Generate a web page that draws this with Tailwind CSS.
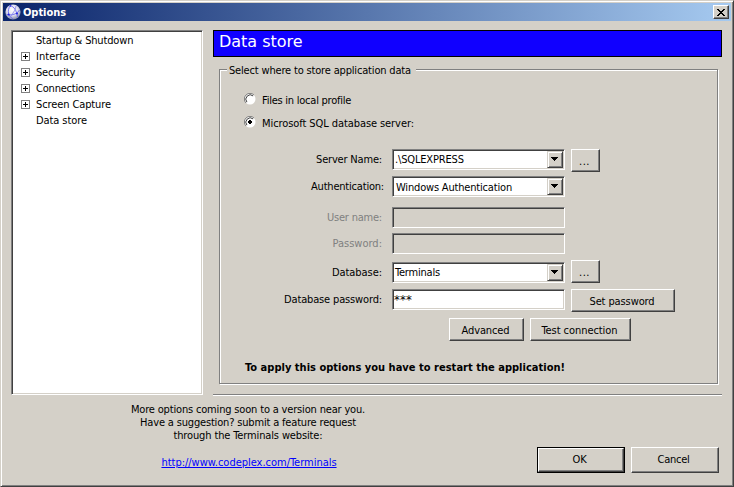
<!DOCTYPE html>
<html lang="en">
<head>
<meta charset="utf-8">
<title>Options</title>
<script src="https://cdn.jsdelivr.net/npm/@tailwindcss/browser@4"></script>
</head>
<body class="overflow-hidden">
<div class="w-[734px] h-[487px] border border-t-[#d4d0c8] border-l-[#d4d0c8] border-r-[#404040] border-b-[#404040] bg-[#d4d0c8] shadow-[inset_1px_1px_0_#fff,inset_-1px_-1px_0_#808080] p-[2px] flex flex-col text-[11px] leading-[13px] text-black whitespace-nowrap font-['DejaVu_Sans_Condensed','DejaVu_Sans',sans-serif] tracking-[-0.16px]">

  <!-- Title bar -->
  <header class="h-[18px] shrink-0 flex items-center pl-[2px] pr-[2px] bg-linear-to-r/srgb from-[#0a246a] to-[#a6caf0]">
    <svg class="size-4 shrink-0" viewBox="0 0 16 16">
      <defs><radialGradient id="g" cx=".45" cy=".35" r=".65"><stop offset="0" stop-color="#fff"/><stop offset=".6" stop-color="#dcdcec"/><stop offset="1" stop-color="#8288a8"/></radialGradient></defs>
      <circle cx="8" cy="8" r="7.6" fill="url(#g)"/>
      <g fill="none" stroke="#5a5af0" stroke-width=".8">
        <path d="M5.5 1.2C3.5 4 3 7 3.6 9.5S6 13.5 8 15.2"/>
        <path d="M5.5 1.5C9 3 11.5 6 12.5 13"/>
        <path d="M1.5 10.5C5 11.5 9 11 12.5 8.5L14.5 6"/>
        <path d="M11 2L10 6 5 13.5" stroke="#8a8aee"/>
      </g>
      <g fill="#2020e0"><circle cx="3.7" cy="10.5" r="1"/><circle cx="12" cy="9.5" r="1"/><circle cx="5.5" cy="2" r=".8"/></g>
    </svg>
    <h1 class="ml-[2px] font-bold text-white tracking-[-0.05px]">Options</h1>
    <button class="ml-auto w-4 h-[14px] bg-[#d4d0c8] border border-t-white border-l-white border-r-[#404040] border-b-[#404040] shadow-[inset_-1px_-1px_0_#808080] flex items-center justify-center" aria-label="Close">
      <svg class="w-2 h-[7px]" viewBox="0 0 8 7" shape-rendering="crispEdges"><path d="M0 0h2v1h1v1h2V1h1V0h2v1H7v1H6v1H5v1h1v1h1v1h1v1H6V6H5V5H3v1H2v1H0V6h1V5h1V4h1V3H2V2H1V1H0z"/></svg>
    </button>
  </header>

  <div class="flex pt-[9px] pl-2">
    <!-- Category tree -->
    <ul class="w-[192px] h-[365px] bg-white border border-t-[#808080] border-l-[#808080] border-r-white border-b-white shadow-[inset_1px_1px_0_#404040,inset_-1px_-1px_0_#d4d0c8] pt-px pl-[9px] [&>li]:h-4 [&>li]:flex [&>li]:items-center [&>li]:gap-[6px]">
      <li class="pl-[15px]">Startup &amp; Shutdown</li>
      <li><svg class="size-[9px]" viewBox="0 0 9 9" shape-rendering="crispEdges"><path d="M.5.5h8v8h-8z" fill="#fff" stroke="#808080"/><path d="M2 4.5h5M4.5 2v5" stroke="#000"/></svg><span class="tracking-[0.02px]">Interface</span></li>
      <li><svg class="size-[9px]" viewBox="0 0 9 9" shape-rendering="crispEdges"><path d="M.5.5h8v8h-8z" fill="#fff" stroke="#808080"/><path d="M2 4.5h5M4.5 2v5" stroke="#000"/></svg><span class="tracking-[-0.2px]">Security</span></li>
      <li><svg class="size-[9px]" viewBox="0 0 9 9" shape-rendering="crispEdges"><path d="M.5.5h8v8h-8z" fill="#fff" stroke="#808080"/><path d="M2 4.5h5M4.5 2v5" stroke="#000"/></svg><span class="tracking-[-0.2px]">Connections</span></li>
      <li><svg class="size-[9px]" viewBox="0 0 9 9" shape-rendering="crispEdges"><path d="M.5.5h8v8h-8z" fill="#fff" stroke="#808080"/><path d="M2 4.5h5M4.5 2v5" stroke="#000"/></svg><span class="tracking-[-0.11px]">Screen Capture</span></li>
      <li class="pl-[15px] tracking-[-0.08px]">Data store</li>
    </ul>

    <!-- Settings page -->
    <main class="ml-[10px] w-[509px]">
      <h2 class="h-[27px] border border-black bg-[#1000ff] text-white text-[16px] leading-[22px] pl-[5px] tracking-[-0.02px] font-['DejaVu_Sans',sans-serif]">Data store</h2>

      <section class="relative mt-[12px] ml-[6px] w-[499px] h-[315px] border border-[#808080] shadow-[1px_1px_0_#fff,inset_1px_1px_0_#fff]">
        <h3 class="absolute left-[7px] -top-[6px] w-[189px] pl-[2px] bg-[#d4d0c8] tracking-[-0.17px]">Select where to store application data</h3>

        <div class="pt-[23px] pl-6">
          <label class="flex items-center gap-[6px] h-3 tracking-[-0.24px]">
            <svg class="size-3" viewBox="0 0 12 12"><circle cx="6" cy="6" r="5.5" fill="#fff"/><path d="M2 10A5.5 5.5 0 0 1 10 2" fill="none" stroke="#808080"/><path d="M2.9 9.1A4.4 4.4 0 0 1 9.1 2.9" fill="none" stroke="#404040"/></svg>
            <span class="translate-y-px">Files in local profile</span>
          </label>
          <label class="flex items-center gap-[6px] h-3 mt-[11px] tracking-[-0.08px]">
            <svg class="size-3" viewBox="0 0 12 12"><circle cx="6" cy="6" r="5.5" fill="#fff"/><path d="M2 10A5.5 5.5 0 0 1 10 2" fill="none" stroke="#808080"/><path d="M2.9 9.1A4.4 4.4 0 0 1 9.1 2.9" fill="none" stroke="#404040"/><path d="M5 4h2v1h1v2H7v1H5V7H4V5h1z" shape-rendering="crispEdges"/></svg>
            <span class="translate-y-px">Microsoft SQL database server:</span>
          </label>
        </div>

        <!-- Connection form -->
        <div class="mt-[21px]">
          <div class="flex h-[21px]">
            <span class="w-[162px] text-right pt-1 tracking-[-0.18px]">Server Name:</span>
            <div class="ml-[10px] w-[173px] h-[21px] bg-white border border-t-[#808080] border-l-[#808080] border-r-white border-b-white shadow-[inset_1px_1px_0_#404040,inset_-1px_-1px_0_#d4d0c8] flex justify-between p-px">
              <span class="pl-px pt-[2px]">.\SQLEXPRESS</span>
              <span class="w-4 h-[17px] bg-[#d4d0c8] border border-t-[#d4d0c8] border-l-[#d4d0c8] border-r-[#404040] border-b-[#404040] shadow-[inset_1px_1px_0_#fff,inset_-1px_-1px_0_#808080] pl-[3px] pt-[5px]"><svg class="w-[7px] h-1" viewBox="0 0 7 4" shape-rendering="crispEdges"><path d="M0 0h7v1H6v1H5v1H4v1H3V3H2V2H1V1H0z"/></svg></span>
            </div>
            <button class="ml-[6px] w-[29px] h-[23px] border border-t-white border-l-white border-r-[#404040] border-b-[#404040] shadow-[inset_-1px_-1px_0_#808080] tracking-[0.5px] pt-[2px] pr-[2px]">...</button>
          </div>
          <div class="flex h-[21px] mt-[6px]">
            <span class="w-[164px] text-right pt-1 tracking-[-0.2px]">Authentication:</span>
            <div class="ml-[8px] w-[173px] h-[21px] bg-white border border-t-[#808080] border-l-[#808080] border-r-white border-b-white shadow-[inset_1px_1px_0_#404040,inset_-1px_-1px_0_#d4d0c8] flex justify-between p-px">
              <span class="pl-[2px] pt-[3px] tracking-[-0.18px]">Windows Authentication</span>
              <span class="w-4 h-[17px] bg-[#d4d0c8] border border-t-[#d4d0c8] border-l-[#d4d0c8] border-r-[#404040] border-b-[#404040] shadow-[inset_1px_1px_0_#fff,inset_-1px_-1px_0_#808080] pl-[3px] pt-[5px]"><svg class="w-[7px] h-1" viewBox="0 0 7 4" shape-rendering="crispEdges"><path d="M0 0h7v1H6v1H5v1H4v1H3V3H2V2H1V1H0z"/></svg></span>
            </div>
          </div>
          <div class="flex h-[21px] mt-[10px]">
            <span class="w-[162px] text-right pt-1 text-[#808080] tracking-[-0.21px]">User name:</span>
            <div class="ml-[10px] w-[173px] h-[21px] border border-t-[#808080] border-l-[#808080] border-r-white border-b-white shadow-[inset_1px_1px_0_#404040]"></div>
          </div>
          <div class="flex h-[21px] mt-[5px]">
            <span class="w-[162px] text-right pt-1 text-[#808080] tracking-[0px]">Password:</span>
            <div class="ml-[10px] w-[173px] h-[21px] border border-t-[#808080] border-l-[#808080] border-r-white border-b-white shadow-[inset_1px_1px_0_#404040]"></div>
          </div>
          <div class="flex h-[21px] mt-[8px]">
            <span class="w-[162px] text-right pt-1 tracking-[-0.06px]">Database:</span>
            <div class="ml-[10px] w-[173px] h-[21px] bg-white border border-t-[#808080] border-l-[#808080] border-r-white border-b-white shadow-[inset_1px_1px_0_#404040,inset_-1px_-1px_0_#d4d0c8] flex justify-between p-px">
              <span class="pl-px pt-[2px] tracking-[-0.2px]">Terminals</span>
              <span class="w-4 h-[17px] bg-[#d4d0c8] border border-t-[#d4d0c8] border-l-[#d4d0c8] border-r-[#404040] border-b-[#404040] shadow-[inset_1px_1px_0_#fff,inset_-1px_-1px_0_#808080] pl-[3px] pt-[5px]"><svg class="w-[7px] h-1" viewBox="0 0 7 4" shape-rendering="crispEdges"><path d="M0 0h7v1H6v1H5v1H4v1H3V3H2V2H1V1H0z"/></svg></span>
            </div>
            <button class="ml-[6px] -mt-[2px] w-[29px] h-[23px] border border-t-white border-l-white border-r-[#404040] border-b-[#404040] shadow-[inset_-1px_-1px_0_#808080] tracking-[0.5px] pt-[2px] pr-[2px]">...</button>
          </div>
          <div class="flex h-[21px] mt-[6px]">
            <span class="w-[162px] text-right pt-1 tracking-[-0.15px]">Database password:</span>
            <div class="ml-[10px] w-[173px] h-[21px] bg-white border border-t-[#808080] border-l-[#808080] border-r-white border-b-white shadow-[inset_1px_1px_0_#404040,inset_-1px_-1px_0_#d4d0c8] pl-px pt-[2px] text-[13px] leading-[16px] tracking-[0.1px]">***</div>
            <button class="ml-[6px] w-[104px] h-[23px] border border-t-white border-l-white border-r-[#404040] border-b-[#404040] shadow-[inset_-1px_-1px_0_#808080] pt-[2px] pr-[2px] tracking-[-0.11px]">Set password</button>
          </div>
          <div class="flex gap-[6px] mt-[8px] ml-[229px]">
            <button class="w-[75px] h-[23px] border border-t-white border-l-white border-r-[#404040] border-b-[#404040] shadow-[inset_-1px_-1px_0_#808080] pt-[2px] pr-[2px] tracking-[-0.11px]">Advanced</button>
            <button class="w-[101px] h-[23px] border border-t-white border-l-white border-r-[#404040] border-b-[#404040] shadow-[inset_-1px_-1px_0_#808080] pt-[2px] pr-[2px] tracking-[-0.06px]">Test connection</button>
          </div>
        </div>

        <p class="mt-[20px] ml-[25px] font-bold tracking-[0.02px]">To apply this options you have to restart the application!</p>
      </section>

      <div class="mt-[10px] h-[2px] border-t border-t-[#808080] border-b border-b-white"></div>
    </main>
  </div>

  <!-- Footer -->
  <footer class="flex pt-[7px]">
    <div class="w-[302px] ml-[94px] text-center">
      <p class="tracking-[-0.17px]">More options coming soon to a version near you.</p>
      <p class="tracking-[-0.17px]">Have a suggestion? submit a feature request</p>
      <p class="tracking-[-0.13px]">through the Terminals website:</p>
      <p class="mt-[14px] pl-[2px] tracking-[-0.02px]"><a class="text-[#0000ff] underline underline-offset-1" href="#">http://www.codeplex.com/Terminals</a></p>
    </div>
    <div class="ml-[138px] mt-[44px] flex gap-[6px]">
      <button class="w-[88px] h-[26px] border border-black p-0"><span class="flex items-center justify-center w-full h-full border border-t-white border-l-white border-r-[#404040] border-b-[#404040] shadow-[inset_-1px_-1px_0_#808080] pr-[3px] pb-px tracking-[-0.14px]">OK</span></button>
      <button class="w-[88px] h-[26px] border border-t-white border-l-white border-r-[#404040] border-b-[#404040] shadow-[inset_-1px_-1px_0_#808080] pr-[3px] pb-px tracking-[-0.26px]">Cancel</button>
    </div>
  </footer>
</div>
</body>
</html>
